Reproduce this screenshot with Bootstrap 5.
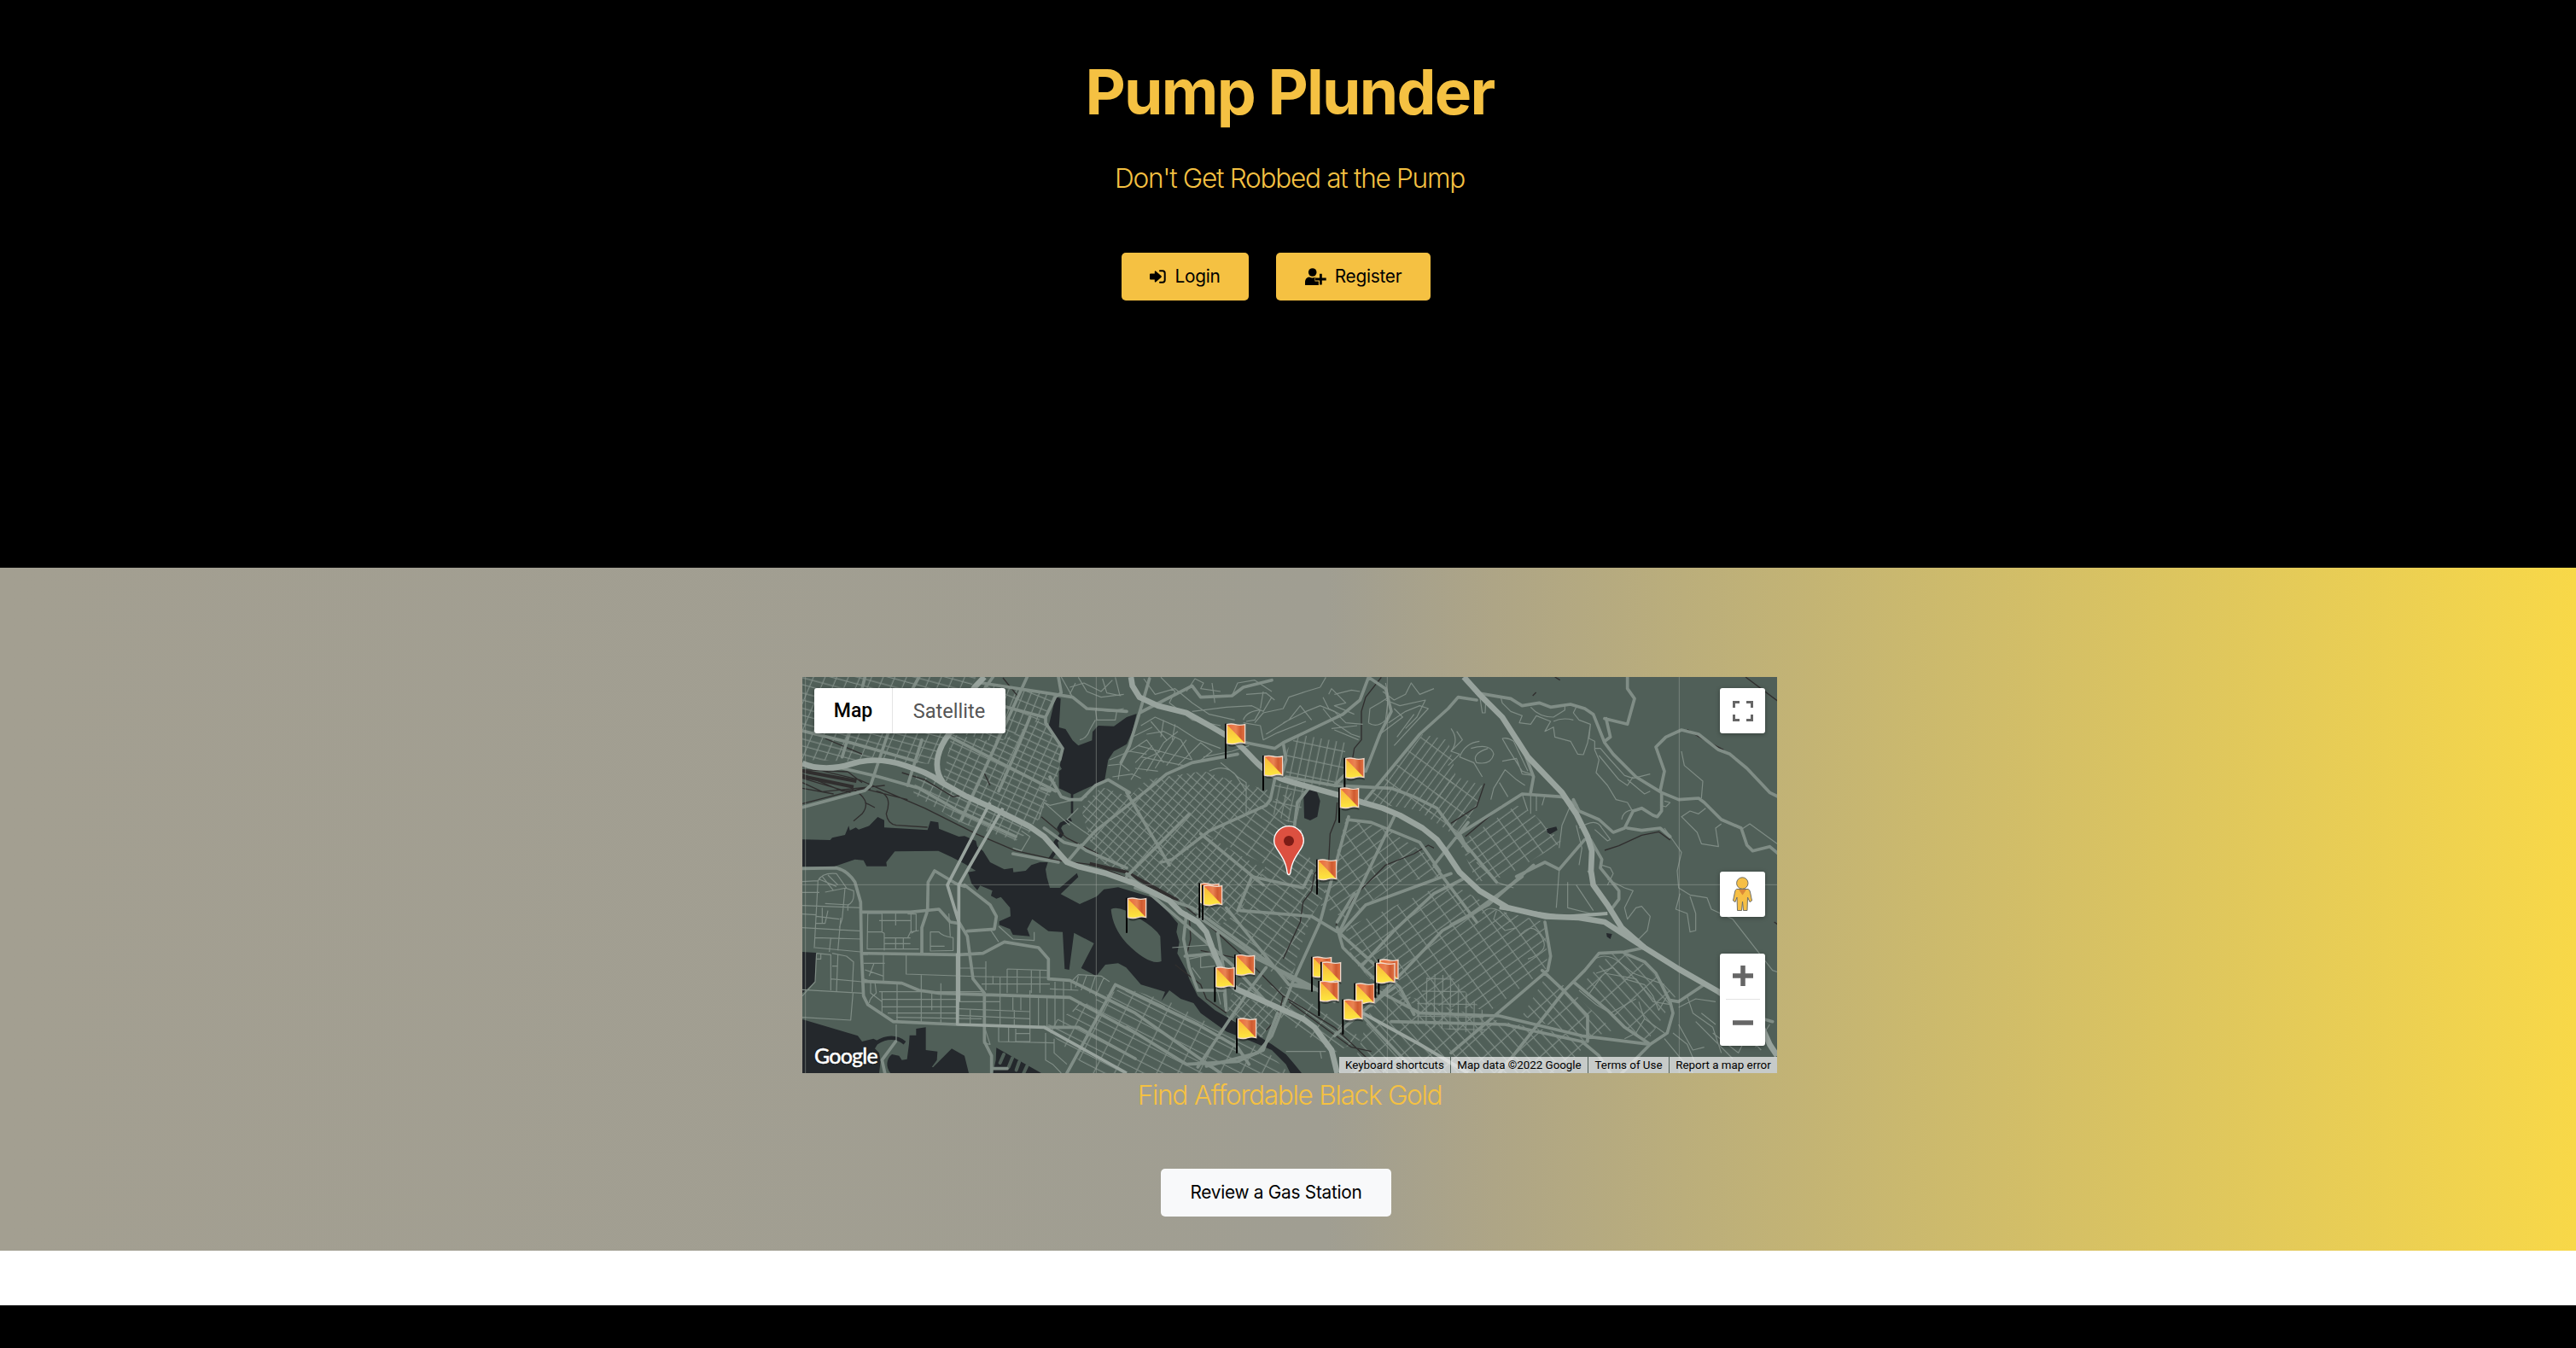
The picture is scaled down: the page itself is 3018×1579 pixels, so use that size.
<!DOCTYPE html>
<html lang="en">
<head>
<meta charset="utf-8">
<meta name="viewport" content="width=device-width, initial-scale=1">
<title>Pump Plunder</title>
<link rel="stylesheet" href="https://cdn.jsdelivr.net/npm/bootstrap@5.3.0/dist/css/bootstrap.min.css">
<style>
:root{--gold:#f5c142}
body{font-family:Inter,"Liberation Sans",sans-serif;background:#fff;overflow-x:hidden}
.hero{height:665px;background:#000;color:var(--gold);padding:64px 0 0 4px}
.hero h1{font-size:73px;line-height:88px;font-weight:700;letter-spacing:-1.75px;margin:0 0 33px}
.tagline{font-size:31.6px;line-height:48px;font-weight:300;letter-spacing:-1.3px;margin:0;color:var(--gold)}
.hero .tagline{margin-bottom:63px}
.stations .tagline{position:relative;top:2px}
.btn-plunder{height:56px;border:0;border-radius:5px;font-size:20.8px;line-height:24px;letter-spacing:-.25px;color:#000;margin-right:32px;display:inline-flex;align-items:center;justify-content:center}
.btn-plunder svg{margin-right:10px}
.btn-gold,.btn-gold:hover{background:var(--gold);color:#000}
.btn-login{width:149px}.btn-register{width:181px}.btn-review{width:270px}
.btn-review,.btn-review:hover{background:#f8f9fa;color:#000}
.review-row{margin-top:64px}
.stations{height:800px;padding:128px 0 0 4px;background:linear-gradient(90deg,#a39f91 0,#a09e92 51.5%,#aea586 58%,#f8d848 100%)}
.station-map{width:1142px;height:464px;position:relative;overflow:hidden;background:#505f58;font-family:Roboto,sans-serif}
.map-canvas{display:block;width:1142px;height:464px}
.map-ui{position:absolute;background:#fff;border-radius:3px;box-shadow:0 1px 5px rgba(0,0,0,.35)}
.map-type{left:14px;top:13px;width:224px;height:53px;font-size:23px;line-height:54px}
.map-type div:first-child{width:92px;font-weight:500;color:#000;border-right:1px solid #e4e4e4}
.map-type div:last-child{flex:1;color:#565656;font-size:23.6px}
.ctl{left:1075px;width:53px;height:53px}
.ctl svg{display:block}
.ctl-full{top:13px}.ctl-peg{top:228px}.ctl-zoom{top:324px;height:108px}
.brandmark{position:absolute;left:14px;bottom:6px;color:#fff;font-family:Lato,sans-serif;font-weight:500;font-size:25px;line-height:30px;letter-spacing:-.8px;text-shadow:0 0 2px #000,0 0 1px #000;-webkit-text-stroke:.4px #fff}
.legal{position:absolute;right:0;bottom:0;height:19px;gap:1px;font-size:13.35px;line-height:19px;color:#000}
.legal span{background:rgba(245,245,245,.72);text-align:center;white-space:nowrap}
.legal span:nth-child(1){width:130px}.legal span:nth-child(2){width:160px}.legal span:nth-child(3){width:94px}.legal span:nth-child(4){width:126px}
.spacer{height:64px}
.foot{height:50px;background:#000}
</style>
</head>
<body>
<header class="hero text-center">
  <h1>Pump Plunder</h1>
  <p class="tagline">Don't Get Robbed at the Pump</p>
  <div class="d-flex justify-content-center">
    <a class="btn btn-plunder btn-gold btn-login px-0" href="#">
      <svg width="19" height="16" viewBox="0 0 19 16"><path d="M0 5.500Q0 4.600 1 4.600H5.800V2.300Q6 .8 7.300 1.700L13.600 7.300Q14.200 8 13.600 8.700L7.300 14.300Q6 15.100 5.800 13.700V11.400H1Q0 11.400 0 10.500Z"/><path d="M12 1.300H15Q17.700 1.300 17.700 4V12Q17.700 14.700 15 14.700H12" fill="none" stroke="#000" stroke-width="2" stroke-linecap="round"/></svg><span>Login</span></a>
    <a class="btn btn-plunder btn-gold btn-register px-0" href="#">
      <svg width="25" height="20" viewBox="0 0 25 20"><circle cx="8.700" cy="5" r="4.800"/><path d="M0 19.500V17C0 13 2 11 5 10.600Q8.500 12.500 12 10.600L13.600 11V15H17V19Q16.500 20 15.500 20H1Q0 20 0 19.500Z"/><path d="M11.500 13H25M18.400 6V20" stroke="#f5c142" stroke-width="5" fill="none"/><path d="M12 13H24.700M18.400 6.700V19.500" stroke="#000" stroke-width="2.800" fill="none"/></svg><span>Register</span></a>
  </div>
</header>

<main class="stations text-center">
  <div class="station-map mx-auto">
  <svg class="map-canvas" viewBox="30 39 3426 1392" preserveAspectRatio="none">
    <defs>
      <pattern id="g15" width="38" height="52" patternUnits="userSpaceOnUse" patternTransform="rotate(15) skewX(-8)"><path d="M0 4H38M4 0V52M0 32H38" class="s"/></pattern>
      <pattern id="g25" width="34" height="24" patternUnits="userSpaceOnUse" patternTransform="translate(4 6) rotate(25)"><path d="M0 4H34M4 0V24" class="s"/></pattern>
      <pattern id="g24" width="26" height="38" patternUnits="userSpaceOnUse" patternTransform="rotate(22)"><path d="M0 4H26M4 0V38" class="s"/></pattern>
      <pattern id="g45" width="29" height="25" patternUnits="userSpaceOnUse" patternTransform="rotate(41)"><path d="M0 4H29M4 0V25" class="s"/></pattern>
      <pattern id="g40" width="62" height="27" patternUnits="userSpaceOnUse" patternTransform="rotate(36)"><path d="M0 4H62M4 0V27" class="s"/></pattern>
      <pattern id="g10" width="27" height="56" patternUnits="userSpaceOnUse" patternTransform="rotate(12)"><path d="M0 4H27M4 0V56" class="s"/></pattern>
      <pattern id="gm38" width="58" height="31" patternUnits="userSpaceOnUse" patternTransform="rotate(-36)"><path d="M0 4H58M4 0V31" class="s"/></pattern>
      <pattern id="gm50" width="64" height="25" patternUnits="userSpaceOnUse" patternTransform="rotate(-54)"><path d="M0 4H64M4 0V25" class="s"/></pattern>
      <pattern id="gm42" width="31" height="66" patternUnits="userSpaceOnUse" patternTransform="rotate(-42)"><path d="M0 4H31M4 0V66" class="s"/></pattern>
      <pattern id="g27" width="66" height="31" patternUnits="userSpaceOnUse" patternTransform="rotate(27)"><path d="M0 4H66M4 0V31" class="s"/></pattern>
      <pattern id="g0" width="28" height="44" patternUnits="userSpaceOnUse" patternTransform="rotate(1)"><path d="M0 4H28M4 0V44" class="s"/></pattern>
      <linearGradient id="red" x1="0" x2="1"><stop offset="0" stop-color="#e9683a"/><stop offset=".5" stop-color="#e98352"/><stop offset=".75" stop-color="#cf5a30"/><stop offset="1" stop-color="#e07343"/></linearGradient>
      <linearGradient id="yel" x1="0" x2="0" y1="0" y2="1"><stop offset="0" stop-color="#f8b63a"/><stop offset="1" stop-color="#fde83f"/></linearGradient>
      <g id="flag"><path d="M8 8H70V78Q50 72 36 78T8 78Z" fill="#000" opacity=".35"/><path d="M0 0V123" stroke="#000" stroke-width="6"/><path d="M4 3Q20 -1 34 3T68 3V69Q52 64 38 69T4 69Z" fill="url(#red)"/><path d="M5 4L68 69Q52 64 38 69T5 69Z" fill="url(#yel)"/><path d="M4 3Q20 -1 34 3T68 3V69Q52 64 38 69T4 69Z" fill="none" stroke="#f1d9cb" stroke-width="4"/></g>
    </defs>
    <style>
      .s,.m{fill:none;stroke:#7f8c85;stroke-width:3.6;stroke-linejoin:round}
      .a{fill:none;stroke:#808d86;stroke-width:11;stroke-linejoin:round;stroke-linecap:round}
      .h{fill:none;stroke:#98a39d;stroke-width:20;stroke-linejoin:round}
      .w{fill:#24282c}.l{fill:#505f58}
      .r{fill:none;stroke:#302e2e;stroke-width:4;stroke-linejoin:round}
    </style>
    <rect x="30" y="39" width="3426" height="1392" fill="#505f58"/>

    <!-- street grids -->
    <path fill="url(#g15)" d="M30 39H640L540 240 495 345 390 340 200 335 30 330Z"/>
    <path fill="url(#g24)" d="M675 60L920 100 880 180 720 270 570 235Z"/>
    <path fill="url(#g25)" d="M555 240L720 270 880 180 945 290 925 400 850 560 620 460 525 400Z"/>
    <path fill="url(#g25)" d="M430 385L540 410 700 505 850 570 780 615 580 550 420 450Z"/>
    <path fill="url(#g45)" d="M1080 425L1180 460 1240 400 1440 370 1530 400 1680 440 1670 480 1450 590 1330 700 1250 770 1060 680 1010 500Z"/>
    <path fill="url(#g45)" d="M1250 770L1330 700 1460 600 1660 720 1620 770 1570 860 1500 910 1200 770Z"/>
    <path fill="url(#g40)" d="M1440 590L1750 440 1740 600 1840 700 1870 800 1820 880 1570 860 1660 700Z"/>
    <path fill="url(#g40)" d="M1500 910L1570 860 1820 880 1770 1020 1750 1110 1650 1060Z"/>
    <path fill="url(#g10)" d="M1730 300L1770 240 1940 270 1930 430 1730 405Z"/>
    <path fill="url(#g10)" d="M1690 410L1810 430 1760 560 1680 520Z"/>
    <path fill="url(#gm50)" d="M2010 480L2210 240 2300 260 2330 400 2240 520 2160 500Z"/>
    <path fill="url(#gm50)" d="M2210 520L2300 380 2420 420 2400 500 2330 600Z"/>
    <path fill="url(#gm38)" d="M1940 540L2080 570 2220 660 2280 740 2130 760 1940 890 1850 840 1910 650Z"/>
    <path fill="url(#gm38)" d="M2340 620L2540 490 2600 520 2700 620 2500 740 2400 760Z"/>
    <path fill="url(#gm38)" d="M1940 920L2300 760 2480 860 2640 900 2650 1060 2450 1210 2100 1180 1960 1030Z"/>
    <path fill="url(#gm42)" d="M2050 1130L2440 1240 2800 1310 2700 1431H1960Z"/>
    <path fill="url(#gm42)" d="M2650 1080L2740 1150 2880 1280 2790 1310 2560 1230Z"/>
    <path fill="url(#gm42)" d="M2770 1120L2870 1010 2950 1010 3100 1160 3000 1320 2910 1270Z"/>
    <path fill="url(#g0)" d="M2190 1190L2230 1080 2310 1090 2420 1210 2440 1300 2190 1260Z"/>
    <path fill="url(#g40)" d="M1540 1110L1740 1130 2000 1310 1900 1360 1730 1250Z"/>
    <path fill="url(#g27)" d="M1160 1130L1320 1180 1540 1300 1660 1350 1740 1431H1050L880 1270 1000 1200Z"/>
    <path fill="url(#g45)" d="M1540 1150L1700 1205 1640 1320 1520 1240Z"/>

    <!-- shoreline and lakes -->
    <g class="w">
      <path d="M920 108L938 115 932 216 955 222 980 262 1000 280 1048 262 1050 232 1070 210 1125 212 1170 180 1205 168 1190 230 1170 275 1125 300 1105 330 1092 405 1040 425 982 452 982 518H974V450L932 430V370L942 362 935 350 948 292 895 215Z"/>
      <path d="M30 610L128 612 135 604 180 594 193 562 197 578 218 568 228 575 265 562 295 531 318 542V568L470 577 480 545 508 550 510 572 580 600 600 598 640 615 645 635 665 650 690 690 740 715 770 710 772 725 815 720 835 700 865 690 893 690 885 715 890 745 900 780 935 780 995 728 1000 742 938 802 1005 837 1065 810 1090 785 1140 778 1265 815 1320 870 1350 905 1345 935 1355 970 1348 1010 1380 1070 1390 1100 1420 1160 1480 1210 1600 1280 1680 1330 1730 1365 1760 1400 1785 1431H1745L1730 1400 1680 1350 1610 1320 1520 1285 1430 1220 1405 1185 1360 1170 1320 1140 1292 1178 1305 1145 1220 1120 1168 1060 1140 1045 1095 1050 1063 1090 1010 1062 1055 975 985 938 968 1068 952 1065 945 935 895 932 838 890 820 925 830 950 770 945 760 925 722 910V898L762 880 760 850 728 812 712 818 693 808 698 790 655 772 645 788 625 765 612 725 640 720 600 695 555 672 508 650 355 652 325 690 327 704H256L245 683 215 680 140 706H30Z"/>
      <path d="M30 1005L78 1008 75 1110 30 1150ZM30 1242L225 1300 240 1320 280 1310 300 1320 285 1345 300 1360 305 1390 300 1431H30Z"/>
      <path d="M405 1328L407 1298H430V1275L464 1270V1350L505 1355 503 1385 485 1410 490 1410 555 1345 600 1370 615 1431H340C322 1410 325 1380 345 1365L370 1370 380 1385 398 1382Z"/>
      <path d="M712 1342L870 1431H700L710 1385Z"/>
      <path d="M1802 432L1838 440 1850 475 1840 530 1815 543 1794 535 1792 460ZM2646 573L2680 565 2684 577 2658 592 2648 585ZM2856 939L2876 942 2870 960 2858 952Z"/>
    </g>
    <path d="M290 1325Q345 1290 390 1325M975 540L940 556 932 570 942 590 920 620 926 640 900 680" fill="none" stroke="#24282c" stroke-width="13"/>
    <path class="l" d="M1115 855Q1145 840 1210 885 1270 920 1288 950L1292 1038Q1250 1055 1170 975 1120 920 1115 855Z"/>
    <path d="M725 1395L738 1365M755 1410L768 1378M782 1420L792 1392M808 1431L820 1405" stroke="#505f58" stroke-width="12" stroke-linecap="round"/>

    <!-- railways -->
    <g class="r">
      <path d="M30 352L230 400 320 440 460 500 640 590 780 650 940 685 1060 700 1170 745 1330 810 1480 930 1600 1040 1720 1160 1900 1270 2070 1431M30 365L190 372 240 410M30 380L170 440 270 432M30 395L200 445M30 410L100 442 320 420M30 430L140 450M30 484L240 430 400 470M200 430Q280 470 240 520L210 545M250 480L285 498M290 440Q350 450 325 520 330 555 360 560L470 567M110 255L240 310M380 375L460 400 560 460 610 450M670 378L690 420M735 42L790 110M870 530L960 605 1070 660M1430 1000L1620 1040M1720 1160L1700 1240 1660 1280M1740 1180L1960 1340 2030 1355M1390 880L1395 960 1380 1020M1340 1050L1430 1120 1450 1170 1520 1220"/>
      <path d="M30 370L220 405M30 388L210 425" stroke-width="12"/><path d="M1040 695L1170 725 1350 825" stroke-width="12"/>
      <path d="M2065 40L2010 110 1995 160V260L1970 290 1960 350M1910 480L1905 540 1885 590 1880 690 1830 730 1820 790 1790 830 1780 900 1720 1030M2040 740L2080 700 2180 660 2230 630 2250 640M2360 600L2420 550 2490 490M2310 553L2400 495 2428 413M2850 648L2900 632 2980 595 3040 583 3080 612M3140 224L3200 260 3268 295M3345 39L3460 125M2675 39L2693 50M2597 105L2609 93M2060 720L1990 790 1940 850 1905 912M3446 900L3460 910"/>
    </g>

    <!-- residential streets -->
    <g class="m">
      <path d="M940 39L980 110 1030 150 1110 160 1160 150M1000 40L1030 90 1080 110 1160 100M970 75L1020 60 1080 90 1120 50M1060 150L1065 190 1130 190 1135 160M1005 260Q1030 255 1040 225L1060 190M1085 45L1100 95 1150 105M1130 40L1145 100M1110 330L1180 300 1240 310M1105 350L1150 345 1180 370M1120 390L1190 380 1220 395M1150 340L1140 400M990 60L970 100"/>
      <path d="M1030 460L900 490 880 480 860 540M1000 500L960 540 1060 610M880 480L970 560M800 580L830 600 800 650 770 640"/>
      <!-- northern hills -->
      <path d="M1230 45L1270 100 1340 80 1400 130 1460 170 1550 190M1290 40L1340 90 1320 130 1400 190 1500 210M1380 90L1410 45 1440 60 1430 80 1500 90M1540 105L1560 60 1620 50 1680 90M1400 160L1520 145 1610 140 1650 160 1680 110M1590 100L1660 95 1690 120M1580 190Q1590 160 1640 155L1620 190 1590 195M1620 200L1650 165 1720 150 1740 110 1800 90 1850 75M1850 75L1870 40M1660 240L1740 190 1780 140 1820 190M1720 200L1800 160M1580 200L1640 210 1650 260 1700 235 1800 195M1880 100L1890 80 1940 130 1900 140 1970 170M1900 100L1960 85 1990 90M1800 160L1850 140 1900 160 1940 200 2000 205M1860 150L1900 200 1960 240 1990 250M1890 220L1980 210M1900 225L1985 260"/>
      <path d="M1220 210L1270 180 1350 215 1420 260 1500 290M1240 240L1300 230 1360 260 1400 330M1180 300L1240 260 1300 340M1240 370L1300 270 1350 230M1270 360L1340 250M1310 350L1380 260M1210 280L1400 330M1220 320L1370 350M1200 360L1280 370M1350 350L1430 270 1470 300 1420 340M1440 320L1540 300 1600 280M1500 340L1550 380 1590 440M1460 370Q1520 340 1560 390L1590 410V520M1190 250L1260 215M1200 340L1260 280M1255 195L1310 260M1300 190L1290 250M1340 205L1330 260M1185 400L1230 330 1290 300M1650 90L1640 150M1470 60L1480 130M1860 110L1880 150 1930 175"/>
      <path d="M2020 200L2025 150 2060 130 2090 110 2080 60M2070 90L2110 120 2150 100 2170 60 2200 100 2250 80M2080 120L2130 140 2220 120 2190 180 2150 220M2110 150L2140 180 2060 240M2090 200L2150 160 2200 140 2230 150 2110 280M2120 250L2180 170M2020 200Q2050 220 2080 190L2090 110M2330 230L2350 260 2310 300 2340 310 2300 350"/>
      <!-- eastern ridge -->
      <path d="M2310 220Q2340 260 2310 300M2340 320Q2360 270 2410 265M2380 290Q2450 270 2460 310 2450 350 2400 340 2380 310 2440 290M2340 320L2390 340 2420 390M2410 100L2420 165H2430L2432 120M2485 110L2490 130 2520 160 2560 175 2550 200 2590 205 2610 175 2660 195 2640 230 2670 215 2675 250 2730 265 2755 310 2775 312 2790 270 2800 205 2760 190 2740 165 2750 145M2590 145Q2620 180 2670 180L2710 155V135M2670 195Q2700 180 2740 190M2800 205L2795 255 2815 265 2815 295 2830 330 2820 375 2860 420 2890 470 2930 480 2945 505M2815 290L2835 290 2870 330 2920 385 2950 395 3010 380M2830 315L2900 400 2930 420 2950 390M2930 400L2990 450 3010 440M2490 255Q2510 250 2530 265L2580 370M2490 255L2510 290 2560 370 2590 380M2490 335L2540 325 2560 380 2600 385M2450 470L2460 430 2500 365 2540 400 2570 420M2480 410L2510 460M2560 450L2580 510M2590 455V520M2610 455V510M2640 455L2630 490M3120 300L3130 350 3195 405 3190 465M3205 500L3180 520 3150 510 3120 530 3175 585 3190 625 3250 635 3240 570 3260 555M3330 575L3360 555 3456 625M3060 570L3120 655 3105 720 3110 780 3150 805 3210 815 3225 855 3300 890 3440 1070 3456 1075M3115 800L3100 855 3140 870 3150 935 3170 930V870L3150 810M2910 540Q2915 505 2960 505M3060 475L3080 480 3065 495 3045 490M2750 560L2770 640 2760 700M2760 570Q2820 530 2840 570L2870 610 2860 615 2815 575M2840 700L2870 710 2880 730 2860 770M2860 750L2920 780 2950 790 2920 850 2930 890 2960 850 2980 845 3010 880 3000 930 2960 970M2690 640L2700 560 2730 490M2400 690L2470 760 2530 780M2690 720L2680 850M2720 760L2720 850 2800 870 2840 870M2750 770L2810 860M2790 720L2850 830"/>
      <!-- foothill neighbourhoods -->
      <path d="M2800 1040Q2850 1000 2900 1040L2950 1080 3060 1120M2850 1080L2960 1100 3020 1180 3080 1190M2820 1080L2880 1060 2920 1100 2990 1120 3020 1160 3040 1210 3070 1160M2760 1140L2820 1190 2870 1220 2960 1170M2790 1160L2840 1090M2970 1180L2990 1240 2960 1290 2920 1310M2990 1240L3060 1290M3140 1160L3160 1220 3230 1270 3260 1360M3110 1200L3170 1170 3240 1180M3110 1260L3160 1350 3200 1340M3190 1220L3240 1260M3090 1290L3140 1330 3170 1400M3060 1310L3160 1431M3230 1290L3320 1360 3350 1300 3400 1350M3380 1340L3430 1260M3170 1250L3300 1380"/>
      <path d="M2420 870Q2440 840 2480 860L2520 900M2470 860L2460 890 2500 930 2540 920M2550 950Q2590 900 2620 940T2630 1000 2580 1030"/>
      <!-- island streets -->
      <path d="M30 758L85 755M30 796H90M30 842L240 850M30 872L80 875M30 920L240 932M75 955L240 960M75 990L235 1005M85 755L72 992M110 835L195 840M165 885L155 1000M130 955L125 1005M180 780L170 890 160 920M80 880L160 890M100 850V905H75M120 860L110 905 75 905M85 755Q100 725 150 730L185 780 110 795M90 750L150 775M100 740L140 790M120 735L155 770M80 1010L130 1015V1140M135 1010L185 1020 210 1040 205 1145M155 1015L150 1145M95 1010V1030H80M135 1055H155M130 1100L240 1110M30 1138L240 1150M80 1010L75 1110 30 1160M30 1235L200 1245 208 1150M180 780L210 790Q215 830 190 840V860"/>
      <path d="M260 870H310V935L318 940V1000M260 870L258 995H440M300 895H410M358 870V912M412 870V935M310 935H258M400 872H430L430 930 412 940M318 956H410M318 976H410M358 956V995M385 956V995M400 956L410 935 440 930M480 935H510Q520 950 560 955V1000L480 1002ZM480 985H530M245 1045H320M315 1010V1110M250 1068L315 1090M282 1045L265 1090M395 1010V1083L660 1092 890 1095M245 1100L275 1110M315 1110H270M675 1038V1140M585 1062H675M750 1065L890 1070M750 1065V1150M785 1065V1150M835 1068V1150M865 1070V1150M700 1090V1120M725 1095V1270M660 1118H900M300 1145H670M290 1150Q265 1170 265 1185M270 1110L270 1150 310 1180M285 1110L290 1150M310 1145V1225M363 1110V1250M448 1085V1255M485 1150V1210M517 1115V1255M310 1172H570M310 1198H570M330 1220H570M360 1235L660 1240M580 1180H725M580 1205L830 1215M580 1228L830 1240M620 1205V1260M770 1165V1210M798 1165V1210M830 1140V1265M775 1210V1265M860 1160V1265M890 1160V1265M918 1110V1265M948 1110V1270M975 1110V1140M900 1135L1000 1140M670 1268L690 1330 665 1325M720 1270V1320L915 1325M755 1270V1320M780 1275V1320H830V1270M780 1292H830M885 1290V1385L910 1400 940 1431M915 1310V1360L960 1400M975 1110L1000 1085 1080 1090 1110 1110M1000 1090L990 1130M1030 1085L1010 1140M1060 1090L1040 1150M1090 1095L1060 1160M980 1215L1010 1180M690 925L720 970M720 915L770 960 845 965V935M545 870L550 950M360 1260V1320"/>
      <path d="M1330 990L1470 980 1490 1010M1390 1030L1480 1010M1430 1020V1060L1480 1055M1400 1060L1430 1100M1490 1145L1500 1190M1510 1150L1515 1200M1730 1355H1870M1850 1355L1855 1380"/>
    </g>

    <!-- arterials -->
    <g class="a">
      <path d="M30 228L200 270 430 335M250 39L230 120 170 320M440 39L330 240 270 420 250 438 30 497M150 355L300 390 440 430 580 510 780 600M1010 635L1060 580 1250 430 1310 380 1400 340 1560 310"/>
      <path d="M660 60L920 100 980 110 1030 150 1170 160M700 39L560 235M820 39L590 540M930 39L940 95 920 108 885 180 885 200 945 290M730 140L880 180M945 290L935 330M900 390L940 460 970 470 1010 470 1060 420 1105 400 1180 445M770 660L930 690M1000 630L1030 650 1170 710M960 690L1010 630M720 440L790 280 830 180M540 245L920 440M870 430L900 440M880 570L950 620 1010 635M400 420L450 260"/>
      <path d="M1250 45L1215 165 1180 280 1150 340M1215 165L1400 70 1430 110 1540 105 1580 75 1680 50M1170 445L1320 700M1190 720L1390 520M1290 690L1330 680 1460 580 1660 490 1675 470 1690 400M1170 740L1390 520M1430 590L1650 770M1590 270L1690 290 1720 270 1930 170 1990 120 2020 40M1720 270L1730 330 1710 400M1730 390L1900 420 2100 430 2180 460 2260 500 2370 650M1900 420L1940 380M2020 40L2080 80 2100 160 2060 240 2010 370M2010 470L2200 240 2300 150 2335 110 2400 120M1780 580L1755 600 1770 480 1810 430M1945 540L2030 550 2200 620 2270 720M1950 530L1850 900 1750 1120 1680 1300 1630 1360 1450 1407M1970 800L1910 900M2110 530L1920 930M2370 650L2340 590 2560 450 2700 460 2750 490M2370 550L2250 700 2400 900M2330 590L2470 760"/>
      <path d="M2400 95L2520 115 2560 140 2620 130 2660 145 2730 135 2780 150 2810 170 2850 270 2880 310 2960 390 3050 445 3110 470 3180 465 3200 480 3260 540 3330 570 3350 630 3370 650 3430 635 3460 660M2930 40L2930 80 2955 115 2930 205 2850 185M2855 185L2870 250 2850 265M3045 440L3060 370 3030 285 3065 250 3120 225 3180 240 3250 295 3290 310 3350 360 3430 445 3460 460M3050 445V510L3035 530 3020 525 2980 500 2950 510 2920 570 2880 585 2830 540 2760 510 2740 470M2930 570L2980 578 3045 570 3080 600M2590 445L2600 390 2570 310M2780 610L2690 715 2640 690 2540 740M2800 610L2840 680 2835 710 2900 790 2900 820 2870 860M2310 910L2440 840 2600 700"/>
      <path d="M1570 860L1820 880 1920 940 2130 1130 2180 1225M1920 940L2010 840 2310 730M1910 920L1930 990 2040 1100M2000 1050L2110 930 2250 800 2350 750M2060 1160L2280 930 2370 880 2480 800 2560 740M1820 720L1790 780 1610 740 1560 860M1200 780L1400 850 1750 1100 1900 1160M1520 850L1740 1120 1900 1150M1420 880L1630 1030 1830 1130M1170 730L1540 1050 1660 1180 M1750 1120L1810 1120 1900 1180M2050 1140L2200 1220 2480 1230 2770 1300 3010 1330M2100 1250L2500 1260 2770 1320 2830 1370 2870 1431M1900 1300L2040 1180 2110 1130M1970 1200L2190 1431M2310 1360L2650 1070 2660 1020 2640 900M2630 1070L2700 1135 2790 1230V1320M2480 1431L2710 1140 2780 1070 2830 1010 2920 1005 2990 990M2740 1110L2860 1210 2920 1270 3010 1330M2920 1010L2990 1040 3030 1080 3080 1180 3090 1220 3070 1290 3010 1330 2910 1431M3080 1175L3110 1180 3200 1120M3370 1230L3440 1250M1380 870L1370 960 1390 1060 1420 1140H1510M1375 1020L1465 1012 1490 1040M1490 940L1510 1060 1520 1210M1600 1140L1420 1410M1660 1060L1600 1140M1170 1140L1420 1260 1560 1340 1600 1400M1170 1270L1380 1400 1560 1390 1650 1350 1700 1220"/>
      <path d="M30 712L150 710Q190 720 215 760L235 830 238 1010 245 1160 260 1190 350 1250 570 1260M235 865H410L510 855 550 900 580 905M238 1010L580 1015 665 1010 740 970 860 990 895 1030V1100L970 1105 1200 1220 1500 1431M470 860L472 760 495 720 570 765 600 775M470 860L450 920V1010M600 770L690 840 712 880 705 925 610 932M580 900L610 950 630 1100 670 1150V1320L695 1370V1431M245 1108L380 1115 440 1140 510 1150 970 1165 1200 1290M880 1270L1000 1270 1200 1380M1130 1120L960 1431M1130 1120L1300 1200M695 1415H750M358 1320L310 1385 320 1431"/>
    </g>

    <!-- freeways -->
    <g class="h">
      <path stroke-width="11" d="M690 480L540 770 580 900 575 1260 880 1270 1170 1431M735 500L580 770V1180M575 1010V1260"/>
      <path d="M30 342C80 365 150 362 200 345C260 325 330 330 390 350C450 370 480 380 520 410L600 455 700 500 830 565 880 600 960 690 1000 705 1100 730 1200 765 1320 825 1360 865 1420 900 1450 935 1470 990 1495 1050 1515 1100 1555 1135 1700 1200 1790 1240 1830 1270 1860 1310 1890 1350 1910 1431"/>
      <path d="M670 39L635 75 545 240C515 280 480 350 525 410"/>
      <path d="M1185 39L1190 70 1215 110 1280 140 1380 165 1470 215 1530 250C1580 280 1610 330 1650 360C1700 400 1740 405 1810 425L1920 455 2000 480 2070 500 2130 525 2210 570 2260 610 2290 650 2340 725 2410 790 2510 850 2640 880 2760 885 2850 900 2990 990 3110 1065 3250 1145 3390 1240 3430 1330 3456 1370"/>
      <path d="M2355 39L2410 100 2490 180 2580 320 2700 445 2750 520 2790 600 2805 650 2802 720 2810 770 2860 840 2910 920 2990 990"/>
      <path stroke-width="12" d="M2000 1220L2200 1330 2370 1431M2480 850L2700 882 2860 870"/>
    </g>
    <path d="M41 39V1431M1063 39V1431M2086 39V1431M3112 39V1431M30 769H3456" stroke="#a3aaa0" stroke-opacity=".48" stroke-width="3"/>

    <!-- station flags -->
    <g>
      <use href="#flag" x="1518" y="203"/><use href="#flag" x="1650" y="315"/><use href="#flag" x="1936" y="323"/><use href="#flag" x="1917" y="428"/><use href="#flag" x="1839" y="680"/>
      <use href="#flag" x="1170" y="815"/><use href="#flag" x="1426" y="763"/><use href="#flag" x="1437" y="770"/><use href="#flag" x="1551" y="1015"/><use href="#flag" x="1480" y="1058"/><use href="#flag" x="1557" y="1238"/>
      <use href="#flag" x="1821" y="1022"/><use href="#flag" x="1854" y="1040"/><use href="#flag" x="1846" y="1107"/><use href="#flag" x="1972" y="1115"/><use href="#flag" x="1930" y="1172"/><use href="#flag" x="2056" y="1031"/><use href="#flag" x="2044" y="1043"/>
    </g>
    <path d="M1740 734C1736 734 1735 730 1734 725C1730 690 1718 675 1704 652C1693 637 1688 628 1688 615A52 52 0 0 1 1792 615C1792 628 1787 637 1776 652C1762 675 1750 690 1746 725C1745 730 1744 734 1740 734Z" fill="#dc5040" stroke="#fff" stroke-width="4"/><circle cx="1740" cy="615" r="18" fill="#7b1c16"/>
  </svg>

    <div class="map-ui map-type d-flex"><div>Map</div><div>Satellite</div></div>
    <div class="map-ui ctl ctl-full"><svg width="53" height="53" viewBox="0 0 53 53"><path d="M16.500 23V16.500H23M31 16.500H37.500V23M37.500 31V37.500H31M23 37.500H16.500V31" fill="none" stroke="#666" stroke-width="3"/></svg></div>
    <div class="map-ui ctl ctl-peg"><svg width="53" height="53" viewBox="0 0 53 53"><path d="M19.500 20.500H33Q35 21 35.500 24L37.500 34 35 35.500 32.500 30 32 45.500H27.500L26.500 35 25.500 45.500H20.500L20 30 18 35.500 15.500 34 17.500 24Q18 21 19.500 20.500Z" fill="#f6bf45" stroke="#6f6f68" stroke-width="1"/><path d="M22 21H31L26.500 27.500Z" fill="#dc8937"/><circle cx="26.300" cy="13.500" r="6.700" fill="#f6bf45" stroke="#6f6f68" stroke-width="1"/></svg></div>
    <div class="map-ui ctl ctl-zoom"><svg width="53" height="108" viewBox="0 0 53 108"><path d="M15 26H39M27 14V38M15 81H39" stroke="#666" stroke-width="5.500"/><path d="M7 53.500H47" stroke="#e3e3e3"/></svg></div>
    <div class="brandmark">Google</div>
    <div class="legal d-flex"><span>Keyboard shortcuts</span><span>Map data ©2022 Google</span><span>Terms of Use</span><span>Report a map error</span></div>
  </div>
  <p class="tagline">Find Affordable Black Gold</p>
  <div class="review-row d-flex justify-content-center">
    <a class="btn btn-plunder btn-review px-0" href="#">Review a Gas Station</a>
  </div>
</main>
<div class="spacer"></div>
<footer class="foot"></footer>
<script src="https://cdn.jsdelivr.net/npm/bootstrap@5.3.0/dist/js/bootstrap.bundle.min.js"></script>
</body>
</html>
